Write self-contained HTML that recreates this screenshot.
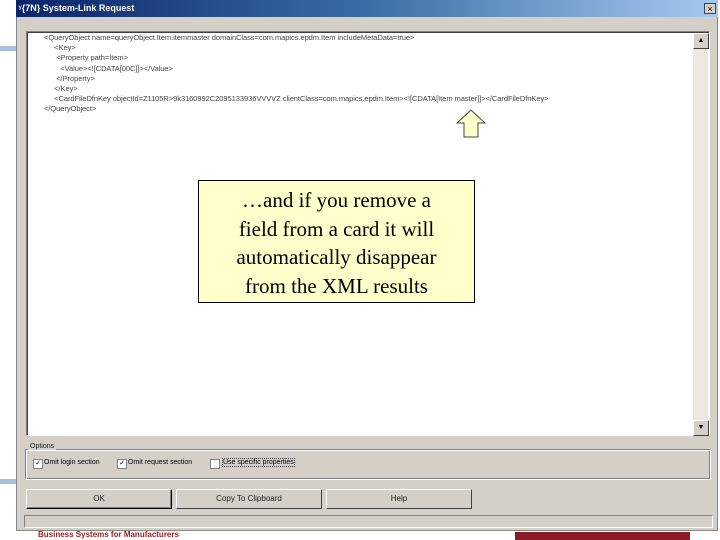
<!DOCTYPE html><html><head><style>
body{margin:0;width:720px;height:540px;position:relative;overflow:hidden;background:#fff;font-family:"Liberation Sans",sans-serif}
.a{position:absolute}
.win{left:16px;top:0;width:702px;height:531px;background:#d4d0c8;border:1px solid #888;box-sizing:border-box}
.title{left:16px;top:0;width:702px;height:17px;background:linear-gradient(90deg,#0a246a 0%,#3a6ea5 50%,#a6caf0 100%);color:#fff;font-size:9px;font-weight:bold;line-height:17px}
.ta{left:26px;top:31px;width:684px;height:405px;background:#fff;border:1px solid #808080;border-right-color:#fff;border-bottom-color:#fff;box-sizing:border-box;box-shadow:inset 1px 1px 0 #404040}
.code{font-size:7.5px;line-height:10.2px;color:#444;white-space:pre;letter-spacing:-0.05px}
.btn{top:489px;height:20px;width:146px;background:#d4d0c8;border:1px solid;border-color:#fff #404040 #404040 #fff;box-sizing:border-box;font-size:8px;text-align:center;line-height:18px;color:#222}
.cb{width:8px;height:8px;background:#fff;border:1px solid #808080;font-size:7px;line-height:8px;text-align:center}
</style></head><body>
<div class="a" style="left:0;top:46px;width:16px;height:5px;background:#a8c0dc"></div>
<div class="a" style="left:0;top:479px;width:16px;height:5px;background:#a8c0dc"></div>
<div class="a" style="left:38px;top:530px;font-size:8px;font-weight:bold;color:#a02020">Business Systems for Manufacturers</div>
<div class="a" style="left:515px;top:532px;width:175px;height:8px;background:#8b1a2a"></div>
<div class="a win"></div>
<div class="a title">&nbsp;<span style="color:#cde">ᵞ</span>{7N} System-Link Request</div>
<div class="a" style="left:704px;top:3px;width:12px;height:11px;background:#d4d0c8;border:1px solid #444;font-size:9px;line-height:10px;text-align:center;box-sizing:border-box">×</div>
<div class="a ta"></div>
<div class="a" style="left:693px;top:33px;width:15px;height:401px;background:#ece9e2"></div>
<div class="a" style="left:693px;top:33px;width:14px;height:14px;background:#d4d0c8;border:1px solid;border-color:#fff #404040 #404040 #fff;font-size:7px;text-align:center;line-height:13px">▲</div>
<div class="a" style="left:693px;top:420px;width:14px;height:14px;background:#d4d0c8;border:1px solid;border-color:#fff #404040 #404040 #fff;font-size:7px;text-align:center;line-height:13px">▼</div>
<div class="a code" style="left:44px;top:33px">&lt;QueryObject name=queryObject.Item.itemmaster domainClass=com.mapics.epdm.Item includeMetaData=true&gt;
     &lt;Key&gt;
      &lt;Property path=Item&gt;
        &lt;Value&gt;&lt;![CDATA[00C]]&gt;&lt;/Value&gt;
      &lt;/Property&gt;
     &lt;/Key&gt;
     &lt;CardFileDfnKey objectId=Z1105R&gt;9k3160992C2095133936VVVVZ clientClass=com.mapics.epdm.Item&gt;&lt;![CDATA[Item master]]&gt;&lt;/CardFileDfnKey&gt;
&lt;/QueryObject&gt;</div>
<svg class="a" style="left:455px;top:109px" width="32" height="30"><polygon points="16,1 30,14 23,14 23,28 9,28 9,14 2,14" fill="#ffffcc" stroke="#444" stroke-width="1"/></svg>
<div class="a" style="left:198px;top:180px;width:277px;height:123px;background:#ffffcc;border:1px solid #000;box-sizing:border-box;font-family:'Liberation Serif',serif;font-size:21px;line-height:28.5px;text-align:center;padding-top:5px">…and if you remove a<br>field from a card it will<br>automatically disappear<br>from the XML results</div>
<div class="a" style="left:26px;top:450px;width:683px;height:28px;border:1px solid #fff;box-shadow:-1px -1px 0 #808080 inset,-1px -1px 0 #808080"></div>
<div class="a" style="left:28px;top:443px;background:#d4d0c8;font-size:7px;color:#222;padding:0 2px">Options</div>
<div class="a cb" style="left:33px;top:459px">✓</div><div class="a" style="left:44px;top:459px;font-size:7px">Omit login section</div>
<div class="a cb" style="left:117px;top:459px">✓</div><div class="a" style="left:128px;top:459px;font-size:7px">Omit request section</div>
<div class="a cb" style="left:210px;top:459px"></div><div class="a" style="left:222px;top:458px;font-size:7px;border:1px dotted #444">Use specific properties</div>
<div class="a btn" style="left:26px;border-color:#fff #000 #000 #fff;box-shadow:inset -1px -1px 0 #808080">OK</div>
<div class="a btn" style="left:176px">Copy To Clipboard</div>
<div class="a btn" style="left:326px">Help</div>
<div class="a" style="left:24px;top:515px;width:689px;height:13px;border:1px solid;border-color:#808080 #fff #fff #808080;box-sizing:border-box"></div>
</body></html>
